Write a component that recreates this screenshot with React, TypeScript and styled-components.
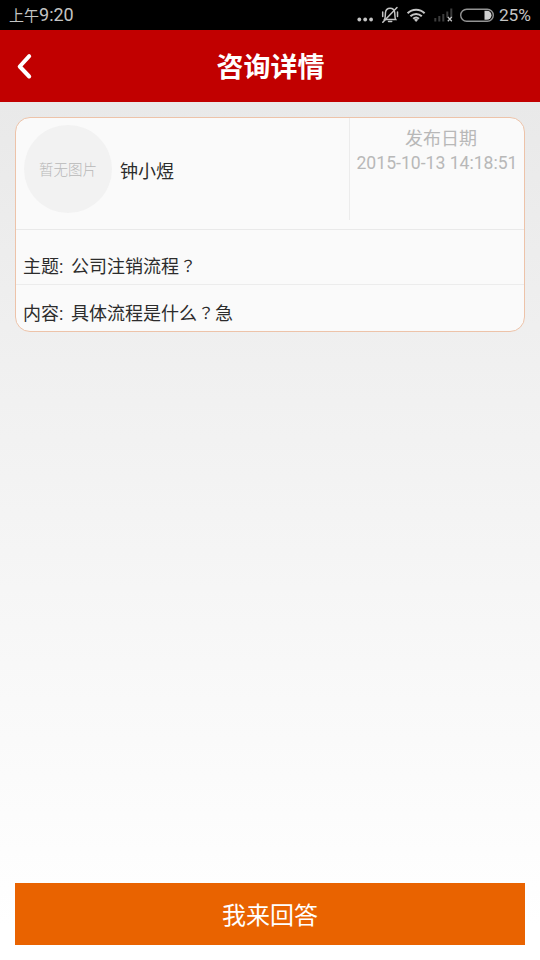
import React from "react";
import styled, { createGlobalStyle } from "styled-components";

const Global = createGlobalStyle`
  * { box-sizing: border-box; }
  body { margin: 0; font-family: Roboto, "Noto Sans CJK SC", sans-serif; }
`;

const Screen = styled.div`
  width: 540px;
  height: 960px;
  display: flex;
  flex-direction: column;
  overflow: hidden;
`;

const StatusBar = styled.div`
  height: 30px;
  flex: none;
  padding: 0 9px;
  display: flex;
  align-items: center;
  justify-content: space-between;
  background: #000;
  color: #c4c4c4;
`;

const Clock = styled.span`
  font-size: 18px;
  line-height: 30px;
  white-space: nowrap;
`;

const ClockPrefix = styled.span`
  font-size: 15px;
`;

const Indicators = styled.div`
  display: flex;
  align-items: center;
`;

const Battery = styled.span`
  margin-left: 4px;
  font-size: 17.3px;
  line-height: 30px;
`;

const Header = styled.header`
  height: 72px;
  flex: none;
  display: grid;
  grid-template-columns: 60px 1fr 60px;
  align-items: center;
  background: #c10000;
  color: #fff;
`;

const BackButton = styled.button`
  height: 72px;
  padding: 0 0 0 15px;
  border: 0;
  background: none;
  display: flex;
  align-items: center;
`;

const Title = styled.h1`
  margin: 0;
  padding: 4px 0 0 1px;
  text-align: center;
  font-size: 27px;
  font-weight: 700;
  line-height: 68px;
`;

const Content = styled.main`
  flex: 1;
  display: flex;
  flex-direction: column;
  justify-content: space-between;
  padding: 15px;
  background: linear-gradient(#e9e9e9, #fff 96%);
`;

const Card = styled.section`
  height: 215px;
  border: 1px solid #edc3a9;
  border-radius: 15px;
  background: #fafafa;
  display: flex;
  flex-direction: column;
  color: #2c2c2c;
`;

const Summary = styled.div`
  height: 112px;
  display: flex;
  border-bottom: 1px solid #e9e9e9;
`;

const Person = styled.div`
  flex: 1;
  display: flex;
  align-items: center;
  padding: 0 0 9px 8px;
`;

const Avatar = styled.div`
  width: 88px;
  height: 88px;
  padding-top: 3px;
  border-radius: 50%;
  background: #f2f2f2;
  color: #b8b8b8;
  font-size: 14.5px;
  font-weight: 300;
  line-height: 86px;
  text-align: center;
`;

const Name = styled.span`
  margin-left: 8px;
  padding-top: 1px;
  font-size: 18px;
`;

const Published = styled.div`
  width: 175px;
  height: 102px;
  padding-top: 8px;
  border-left: 1px solid #ececec;
  color: #b8b8b8;
  text-align: center;
  font-size: 18px;
  line-height: 25px;
  white-space: nowrap;
`;

const PublishedLabel = styled.div`
  padding-left: 8px;
`;

const Stamp = styled.div`
  font-size: 17.6px;
  line-height: 24px;
`;

const Row = styled.div<{ $height: number; $divided?: boolean }>`
  height: ${(p) => p.$height}px;
  padding: 0 7px 4px;
  display: flex;
  align-items: flex-end;
  border-bottom: ${(p) => (p.$divided ? "1px solid #ececec" : "0")};
  font-size: 18px;
  line-height: 26px;
`;

const Label = styled.span`
  width: 48px;
`;

const Mark = styled.span`
  display: inline-block;
  width: 18px;
  text-align: center;
  font-family: "Noto Sans CJK TC", sans-serif;
  font-size: 16px;
  line-height: 20px;
  vertical-align: 1px;
`;

const Answer = styled.button`
  height: 62px;
  flex: none;
  padding: 4px 0 0;
  border: 0;
  background: #e96300;
  color: #fff;
  font-family: inherit;
  font-size: 24px;
  line-height: 58px;
`;

export default function App() {
  return (
    <Screen>
      <Global />
      <StatusBar>
        <Clock><ClockPrefix>上午</ClockPrefix>9:20</Clock>
        <Indicators>
          <svg width="140" height="30" viewBox="355 0 140 30" fill="none" stroke="#c4c4c4">
            <g fill="#c4c4c4" stroke="none">
              <circle cx="359.3" cy="19.5" r="1.9" />
              <circle cx="365.2" cy="19.5" r="1.9" />
              <circle cx="371.1" cy="19.5" r="1.9" />
            </g>
            <g strokeWidth="1.5" strokeLinecap="round">
              <path d="M384.5 19.5c1-1.5.7-4 1-7 .3-2.7 2-4.2 4.6-4.2s4.3 1.5 4.6 4.2c.3 3 0 5.5 1 7z" />
              <path d="M382.8 22.2 397 7.5M388.5 21.6h3.2M382.7 12v4.5M397.5 12v4.5" />
            </g>
            <g strokeWidth="2">
              <path d="M407.6 13.2a12 12 0 0 1 17 0M410.4 16.2a8.2 8.2 0 0 1 11.4 0M413.2 18.8a4.3 4.3 0 0 1 5.8 0" />
              <path d="m416.1 22-2.1-2.2a3 3 0 0 1 4.2 0z" fill="#c4c4c4" stroke="none" />
            </g>
            <g strokeWidth="2" stroke="#3c3c3c">
              <path d="M435.3 18v3.5M439.3 16v5.5M443.3 14v7.5M447.3 11.5v6M451.3 8.5v9" />
              <path d="m447.8 17 4 4.2m0-4.2-4 4.2" stroke="#c4c4c4" strokeWidth="1.3" />
            </g>
            <rect x="460.7" y="9.2" width="32.6" height="12" rx="6" stroke="#939393" strokeWidth="1.4" />
            <path d="M484.5 10.7h2.5a4.5 4.5 0 0 1 0 9h-2.5z" fill="#d0d0d0" stroke="none" />
          </svg>
          <Battery>25%</Battery>
        </Indicators>
      </StatusBar>
      <Header>
        <BackButton aria-label="返回">
          <svg width="20" height="30" viewBox="0 0 20 30" fill="none" stroke="#fff" strokeWidth="4" strokeLinecap="round" strokeLinejoin="round">
            <path d="M14.2 5.2 4.7 15.5l9.5 10" />
          </svg>
        </BackButton>
        <Title>咨询详情</Title>
      </Header>
      <Content>
        <Card>
          <Summary>
            <Person>
              <Avatar>暂无图片</Avatar>
              <Name>钟小煜</Name>
            </Person>
            <Published>
              <PublishedLabel>发布日期</PublishedLabel>
              <Stamp>2015-10-13 14:18:51</Stamp>
            </Published>
          </Summary>
          <Row $height={55} $divided>
            <Label>主题:</Label>
            <span>公司注销流程<Mark>？</Mark></span>
          </Row>
          <Row $height={46}>
            <Label>内容:</Label>
            <span>具体流程是什么<Mark>？</Mark>急</span>
          </Row>
        </Card>
        <Answer>我来回答</Answer>
      </Content>
    </Screen>
  );
}
